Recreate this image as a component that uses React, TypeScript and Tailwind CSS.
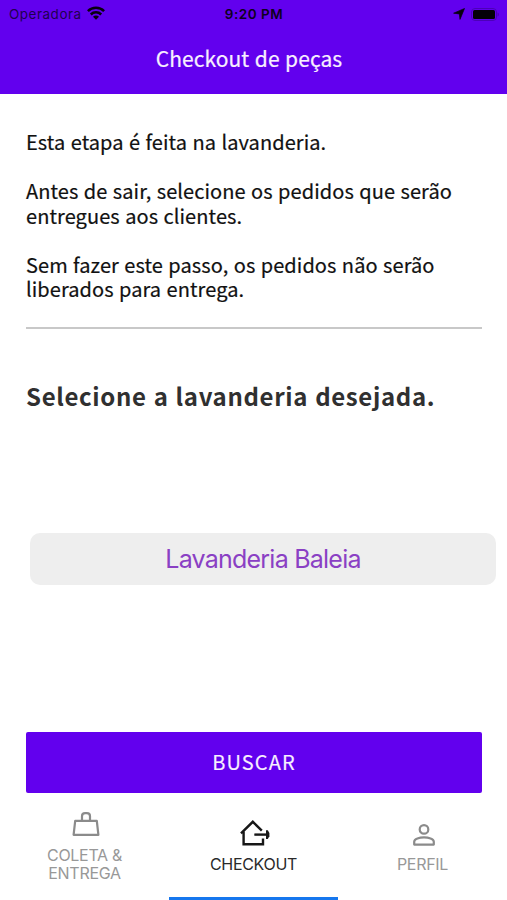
import type { ReactNode } from 'react'

const intro = [
  'Esta etapa é feita na lavanderia.',
  'Antes de sair, selecione os pedidos que serão entregues aos clientes.',
  'Sem fazer este passo, os pedidos não serão liberados para entrega.',
]

function StatusBar() {
  return (
    <div className="grid h-7 grid-cols-3 items-center pl-[9px] pr-2 font-['Inter','Liberation_Sans',sans-serif] text-[13px] text-[#200050]">
      <div className="flex items-center gap-[5px]">
        <span className="text-[13.5px] tracking-[0.5px]">Operadora</span>
        <svg width="18" height="14" viewBox="0 0 18 14" fill="none" stroke="#08000f" strokeWidth="2.5" className="-mt-0.5">
          <path d="M.9 5.2a11.5 11.5 0 0 1 16.2 0" />
          <path d="M3.8 8.5a7.4 7.4 0 0 1 10.4 0" />
          <path d="M9 13.8 6 10.8a4.2 4.2 0 0 1 6 0Z" fill="#08000f" stroke="none" />
        </svg>
      </div>
      <span className="text-center text-[13.5px] font-semibold tracking-[0.5px] text-[#0d0020]">9:20 PM</span>
      <div className="flex items-center justify-end gap-[6px]">
        <svg width="12" height="12" viewBox="0 0 12 12" fill="#08000f" stroke="#08000f" strokeWidth=".7" strokeLinejoin="round">
          <path d="M11.5.5 7 11.4 6.3 5.9.6 5.2Z" />
        </svg>
        <svg width="28" height="13" viewBox="0 0 28 13">
          <rect x=".5" y=".5" width="25" height="12" rx="3.5" fill="none" stroke="#4c00b8" />
          <rect x="2" y="2" width="22" height="9" rx="1.5" fill="#050008" />
          <path d="M26.5 4.5v4c1-.4 1.4-1.1 1.4-2s-.4-1.6-1.4-2Z" fill="#4c00b8" />
        </svg>
      </div>
    </div>
  )
}

function BagIcon() {
  return (
    <svg width="28" height="26" viewBox="0 0 28 26" fill="none" stroke="#8b8b8b" strokeWidth="2.2" strokeLinejoin="round">
      <path d="M3.2 9.8h21.6l1.6 14H1.6Z" />
      <path d="M10 9.8V5.2c0-1.9 1.2-3.1 3.1-3.1h1.8c1.9 0 3.1 1.2 3.1 3.1v4.6" />
    </svg>
  )
}

function HouseOutIcon() {
  return (
    <svg width="30" height="26" viewBox="0 0 30 26" fill="none" stroke="#171717" strokeWidth="2.4">
      <path d="M1 13.4 12.8 1.8 21.8 10.6" />
      <path d="M3.6 11.5V24.2H23V18.6" />
      <path d="M14.3 14.6H27" />
      <path d="M26 10.2h1.8L29.4 13v3.2L27.8 19H26Z" fill="#171717" stroke="none" />
    </svg>
  )
}

function PersonIcon() {
  return (
    <svg width="22" height="22" viewBox="0 0 22 22" fill="none" stroke="#8b8b8b" strokeWidth="2.2">
      <circle cx="11" cy="5.4" r="4.3" />
      <path d="M1.2 20.6v-2.8c0-2.9 5.3-4.4 9.8-4.4s9.8 1.5 9.8 4.4v2.8Z" strokeLinejoin="round" />
    </svg>
  )
}

function Tab({ icon, active, children }: { icon: ReactNode; active?: boolean; children: ReactNode }) {
  return (
    <button
      className={
        active
          ? 'flex flex-1 flex-col items-center justify-center border-b-[3px] border-[#1677ee] text-[#2a2a2a]'
          : 'flex flex-1 flex-col items-center justify-center border-b-[3px] border-transparent text-[#989898]'
      }
    >
      <span className="flex h-[38px] items-end pb-[9px] pl-0.5">{icon}</span>
      <span className="text-[16px] leading-[18.5px] tracking-[-0.3px]">{children}</span>
    </button>
  )
}

export default function App() {
  return (
    <div className="flex h-[900px] w-[507px] flex-col overflow-hidden bg-white font-['Noto_Sans_CJK_JP','Open_Sans',sans-serif]">
      <header className="h-[94px] shrink-0 bg-[#6200ee]">
        <StatusBar />
        <h1 className="pr-[9px] pt-[14px] text-center text-[21px] leading-[32px] tracking-[0.05px] [word-spacing:0.8px] text-[#f8efff] [-webkit-text-stroke:0.2px_#f8efff]">
          Checkout de peças
        </h1>
      </header>

      <main className="flex flex-1 flex-col pl-[26px] pr-[25px] pt-[36px]">
        <div className="flex flex-col gap-[24.5px] text-[20px] leading-[24.5px] tracking-[0.08px] [word-spacing:0.8px] text-[#111] [-webkit-text-stroke:0.2px_#111]">
          {intro.map((text) => (
            <p key={text}>{text}</p>
          ))}
        </div>
        <hr className="mt-[25px] border-t-2 border-[#c8c8c8]" />
        <h2 className="mt-[50px] whitespace-nowrap text-[24px] font-bold leading-[34px] tracking-[0.65px] [word-spacing:1px] text-[#303030]">
          Selecione a lavanderia desejada.
        </h2>
        <div className="-mr-[14px] ml-1 mt-[120px] flex h-[52px] items-center justify-center rounded-[10px] bg-[#eeeeee] pt-[3px] font-['Inter','Liberation_Sans',sans-serif] text-[25px] tracking-[-0.77px] text-[#8a40c4]">
          Lavanderia Baleia
        </div>
        <button className="mt-[147px] h-[61px] w-[456px] rounded-[2px] bg-[#6200ee] text-[20px] tracking-[1.1px] text-[#f8efff] [-webkit-text-stroke:0.15px_#f8efff]">
          BUSCAR
        </button>
      </main>

      <nav className="flex h-[107px] shrink-0 font-['Inter','Liberation_Sans',sans-serif]">
        <Tab icon={<BagIcon />}>
          COLETA &amp;<br />ENTREGA
        </Tab>
        <Tab icon={<HouseOutIcon />} active>CHECKOUT</Tab>
        <Tab icon={<PersonIcon />}>PERFIL</Tab>
      </nav>
    </div>
  )
}
